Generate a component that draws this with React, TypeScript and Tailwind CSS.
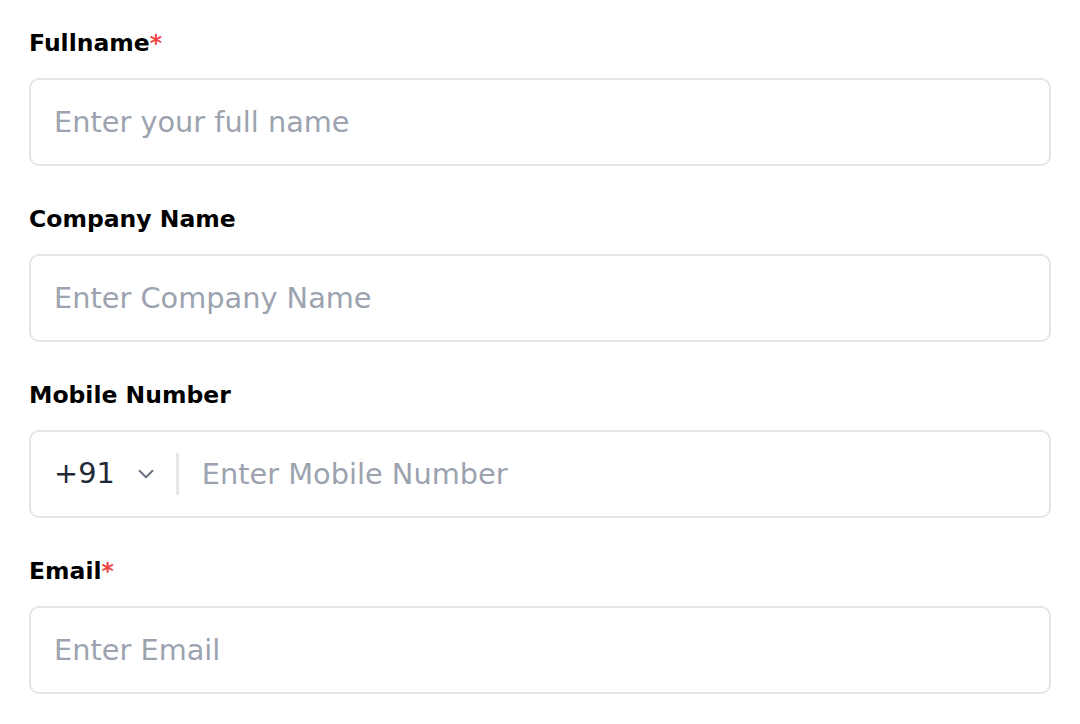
import { ChevronDown } from "lucide-react";

const font = { fontFamily: "'DejaVu Sans', sans-serif" };

function Label({ text, required }: { text: string; required?: boolean }) {
  return (
    <label className="block h-8 text-[23.5px] leading-8 font-bold text-black mb-[19px]">
      {text}
      {required && <span className="text-[#ef4444]">*</span>}
    </label>
  );
}

function Field({
  label,
  placeholder,
  required,
}: {
  label: string;
  placeholder: string;
  required?: boolean;
}) {
  return (
    <div className="mb-[37px]">
      <Label text={label} required={required} />
      <input
        className="w-full h-[88px] rounded-[10px] border-2 border-[#e4e5ea] pl-[23px] pr-6 text-[28.8px] text-[#1f2937] placeholder:text-[#9ca3af] outline-none"
        placeholder={placeholder}
        style={font}
      />
    </div>
  );
}

export default function App() {
  return (
    <div className="min-h-screen bg-white pt-[27px] px-[29px]" style={font}>
      <Field label="Fullname" placeholder="Enter your full name" required />
      <Field label="Company Name" placeholder="Enter Company Name" />

      {/* Mobile with country code */}
      <div className="mb-[37px]">
        <Label text="Mobile Number" />
        <div className="flex items-center h-[88px] rounded-[10px] border-2 border-[#e4e5ea] pl-[23px]">
          <button className="flex items-center gap-[18px] text-[28.8px] text-[#1f2937]">
            +91
            <ChevronDown className="w-[26px] h-[26px] text-[#6b7280]" strokeWidth={1.8} />
          </button>
          <span className="w-[3px] h-[42px] bg-[#e5e7eb] ml-[17px] mr-[23px]" />
          <input
            className="flex-1 h-full bg-transparent text-[28.8px] placeholder:text-[#9ca3af] outline-none"
            placeholder="Enter Mobile Number"
            style={font}
          />
        </div>
      </div>

      <Field label="Email" placeholder="Enter Email" required />
    </div>
  );
}
